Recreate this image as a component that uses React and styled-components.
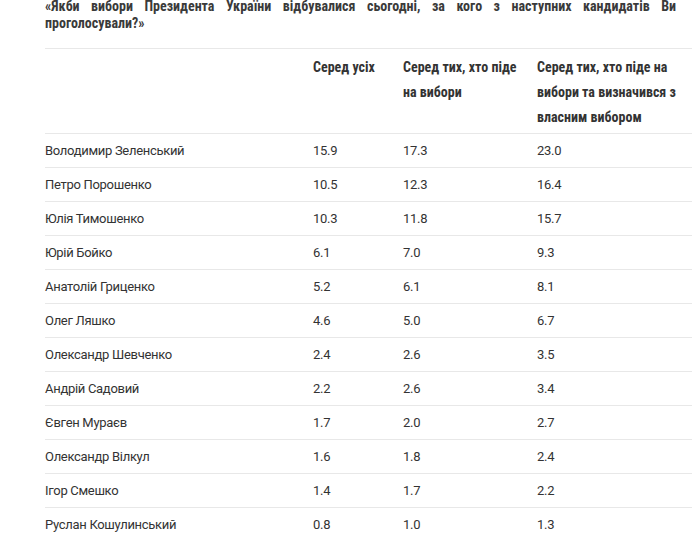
import React from 'react';
import styled, { createGlobalStyle } from 'styled-components';

const GlobalStyle = createGlobalStyle`
  html, body {
    margin: 0;
    padding: 0;
    background: #fff;
    overflow: hidden;
  }
  body {
    font-family: Roboto, "Noto Sans", sans-serif;
    color: #333;
  }
`;

const rows = [
  ['Володимир Зеленський', '15.9', '17.3', '23.0'],
  ['Петро Порошенко', '10.5', '12.3', '16.4'],
  ['Юлія Тимошенко', '10.3', '11.8', '15.7'],
  ['Юрій Бойко', '6.1', '7.0', '9.3'],
  ['Анатолій Гриценко', '5.2', '6.1', '8.1'],
  ['Олег Ляшко', '4.6', '5.0', '6.7'],
  ['Олександр Шевченко', '2.4', '2.6', '3.5'],
  ['Андрій Садовий', '2.2', '2.6', '3.4'],
  ['Євген Мураєв', '1.7', '2.0', '2.7'],
  ['Олександр Вілкул', '1.6', '1.8', '2.4'],
  ['Ігор Смешко', '1.4', '1.7', '2.2'],
  ['Руслан Кошулинський', '0.8', '1.0', '1.3'],
];

const App = () => (
  <>
    <GlobalStyle />
    <Page>
      <Question>
        «Якби вибори Президента України відбувалися сьогодні, за кого з наступних кандидатів Ви проголосували?»
      </Question>
      <Table>
        <colgroup>
          <col width="268" />
          <col width="90" />
          <col width="134" />
          <col width="160" />
        </colgroup>
        <thead>
          <tr>
            <HeadCell />
            <HeadCell>Серед усіх</HeadCell>
            <HeadCell>Серед тих, хто піде на вибори</HeadCell>
            <HeadCell>Серед тих, хто піде на вибори та визначився з власним вибором</HeadCell>
          </tr>
        </thead>
        <tbody>
          {rows.map(r => (
            <tr key={r[0]}>
              {r.map((v, i) => <Cell key={i}>{v}</Cell>)}
            </tr>
          ))}
        </tbody>
      </Table>
    </Page>
  </>
);

const Page = styled.div`
  padding: 0 0 0 45px;
  margin-top: -2px;
  width: 700px;
`;

const Question = styled.p`
  margin: 0 0 16px;
  width: 631px;
  font-family: "Liberation Sans Narrow", "Roboto Condensed", "Liberation Sans", sans-serif;
  font-stretch: condensed;
  font-weight: 700;
  font-size: 14px;
  line-height: 17px;
  text-align: justify;
  color: #3a3a3a;
`;

const Table = styled.table`
  border-collapse: collapse;
  table-layout: fixed;
  width: 652px;
  border-top: 1px solid #e8e8e8;
`;

const HeadCell = styled.th`
  text-align: left;
  vertical-align: top;
  padding: 6px 10px 3px 0;
  font-family: "Liberation Sans Narrow", "Roboto Condensed", "Liberation Sans", sans-serif;
  font-stretch: condensed;
  font-weight: 700;
  font-size: 14px;
  line-height: 25px;
  color: #333;
  border-bottom: 1px solid #e8e8e8;
`;

const Cell = styled.td`
  padding: 0 10px 0 0;
  height: 33px;
  font-size: 13px;
  letter-spacing: -0.3px;
  color: #333;
  border-bottom: 1px solid #e8e8e8;
`;

export default App;
